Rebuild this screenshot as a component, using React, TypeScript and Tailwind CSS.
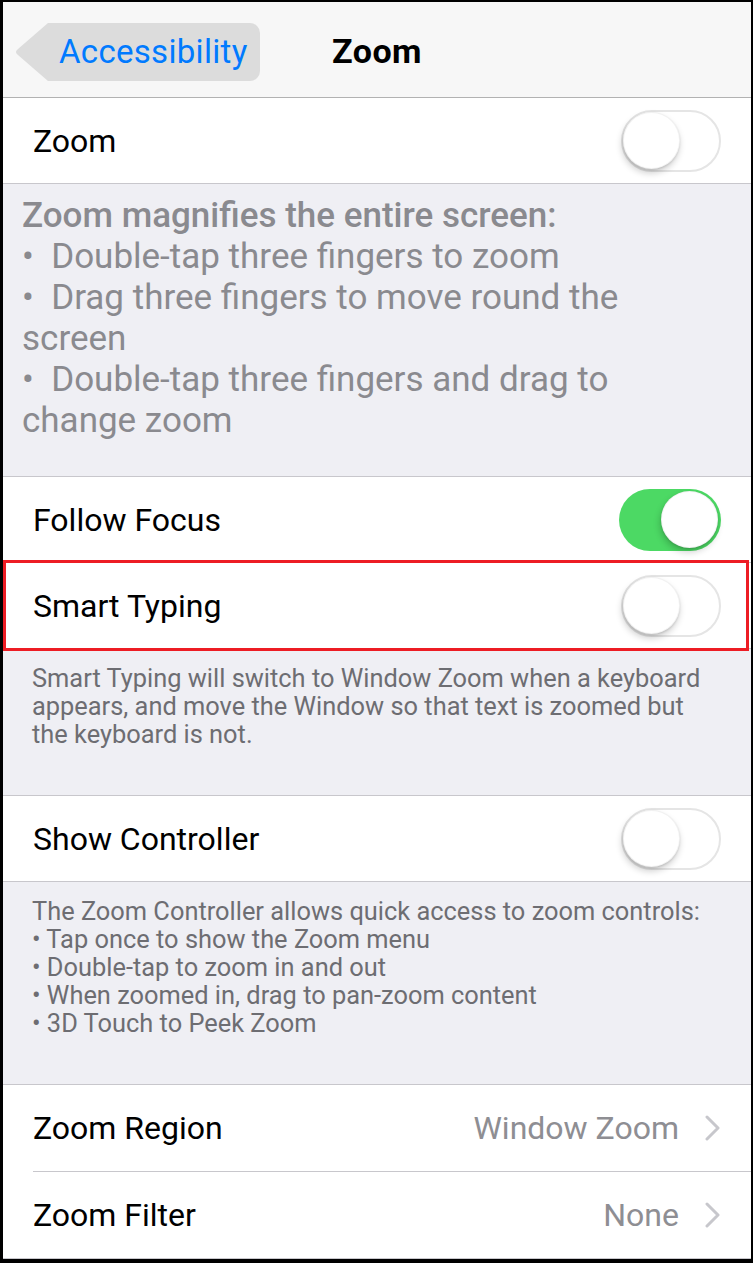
import React from 'react'

const font = "font-['Roboto','Liberation_Sans',sans-serif]"

function Toggle({ on }: { on: boolean }) {
  return (
    <div
      className={
        on
          ? 'w-[102px] h-[62px] rounded-full bg-[#4cd964] flex items-center justify-end p-[3px]'
          : 'w-[100px] h-[62px] rounded-full bg-white border-2 border-[#e5e5e5] flex items-center justify-start'
      }
    >
      <div className="w-[57px] h-[57px] rounded-full bg-white border border-black/5 shadow-[-1px_4px_7px_rgba(0,0,0,0.2),0_1px_2px_rgba(0,0,0,0.12)]" />
    </div>
  )
}

function Chevron() {
  return (
    <svg width="15" height="26" viewBox="0 0 15 26" className="ml-[26px]">
      <path d="M2 2 L13 13 L2 24" fill="none" stroke="#c7c7cc" strokeWidth="3" strokeLinecap="round" strokeLinejoin="round" />
    </svg>
  )
}

function ToggleRow({ label, on }: { label: string; on: boolean }) {
  return (
    <div className="h-[85px] bg-white flex items-center justify-between pl-[30px] pr-[30px]">
      <span className="text-[32px] text-black">{label}</span>
      <Toggle on={on} />
    </div>
  )
}

function ValueRow({ label, value }: { label: string; value: string }) {
  return (
    <div className="h-[86px] bg-white flex items-center justify-between pl-[30px] pr-[31px]">
      <span className="text-[32px] text-black">{label}</span>
      <div className="flex items-center">
        <span className="text-[32px] text-[#8e8e93]">{value}</span>
        <Chevron />
      </div>
    </div>
  )
}

export default function App() {
  return (
    <div className={`w-[753px] h-[1263px] bg-[#efeff4] border-black border-l-[3px] border-r-[2px] border-t-[2px] border-b-[4px] overflow-hidden ${font}`}>
      {/* nav bar */}
      <div className="h-[96px] bg-[#f7f7f7] border-b border-[#b2b2b2] grid grid-cols-[1fr_auto_1fr] items-center pt-[4px]">
        <div className="flex items-center pl-[11px]">
          <svg width="38" height="58" viewBox="0 0 38 58" className="-mr-[1px]">
            <path d="M38 0 L34 0 L4 26 Q0 29 4 32 L34 58 L38 58 Z" fill="#dcdcdc" />
          </svg>
          <div className="h-[58px] bg-[#dcdcdc] rounded-r-[10px] flex items-center pl-[8px] pr-[12px]">
            <span className="text-[33px] text-[#007aff] tracking-[0.3px]">Accessibility</span>
          </div>
        </div>
        <span className="text-[34px] font-bold text-black tracking-[0.5px]">Zoom</span>
        <div />
      </div>

      <div className="border-b border-[#c8c7cc]">
        <ToggleRow label="Zoom" on={false} />
      </div>

      <div className="pt-[11px] pb-[35px] pl-[19px] pr-[70px] text-[35px] leading-[41px] text-[#8a8a8f]">
        <p className="font-medium">Zoom magnifies the entire screen:</p>
        <p>•&nbsp; Double-tap three fingers to zoom</p>
        <p>•&nbsp; Drag three fingers to move round the screen</p>
        <p>•&nbsp; Double-tap three fingers and drag to change zoom</p>
      </div>

      <div className="border-y border-[#c8c7cc] bg-white">
        <ToggleRow label="Follow Focus" on={true} />
        <div className="ml-[30px] h-px bg-[#c8c7cc]" />
        <div className="relative">
          <ToggleRow label="Smart Typing" on={false} />
          <div className="absolute left-0 right-[2px] -top-[3px] -bottom-[3px] border-[3px] border-[#ed1c24]" />
        </div>
      </div>

      <div className="pt-[15px] pb-[47px] pl-[29px] pr-[30px] text-[25.4px] leading-[28px] text-[#6d6d72]">
        <p>Smart Typing will switch to Window Zoom when a keyboard appears, and move the Window so that text is zoomed but the keyboard is not.</p>
      </div>

      <div className="border-y border-[#c8c7cc]">
        <ToggleRow label="Show Controller" on={false} />
      </div>

      <div className="pt-[15px] pb-[47px] pl-[29px] pr-[30px] text-[25.4px] leading-[28px] text-[#6d6d72]">
        <p>The Zoom Controller allows quick access to zoom controls:</p>
        <p>• Tap once to show the Zoom menu</p>
        <p>• Double-tap to zoom in and out</p>
        <p>• When zoomed in, drag to pan-zoom content</p>
        <p>• 3D Touch to Peek Zoom</p>
      </div>

      <div className="border-y border-[#c8c7cc] bg-white">
        <ValueRow label="Zoom Region" value="Window Zoom" />
        <div className="ml-[30px] h-px bg-[#c8c7cc]" />
        <ValueRow label="Zoom Filter" value="None" />
      </div>
    </div>
  )
}
